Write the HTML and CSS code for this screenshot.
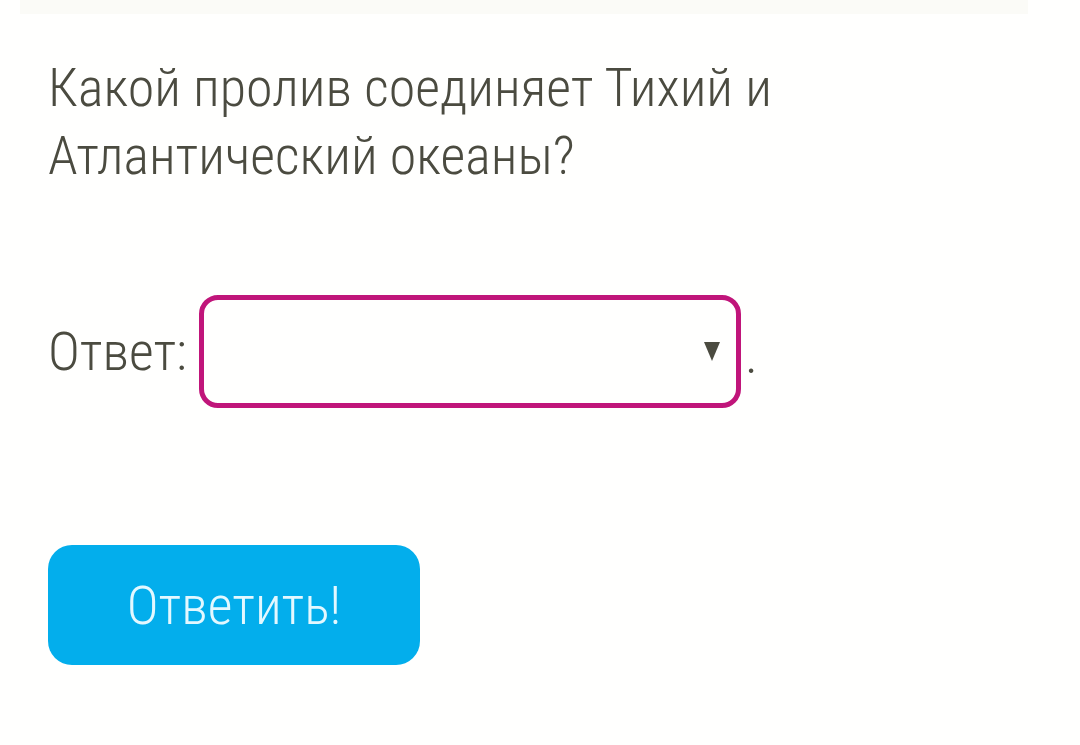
FILE: index.html
```html
<!DOCTYPE html>
<html lang="ru">
<head>
<meta charset="utf-8">
<link rel="stylesheet" href="styles.css">
</head>
<body>
<div class="topband"></div>
<main class="quiz">
  <p class="question">Какой пролив соединяет Тихий и Атлантический океаны?</p>
  <div class="answer-row">
    <span class="label">Ответ:</span>
    <div class="select">
      <span class="arrow"></span>
    </div>
    <span class="dot">.</span>
  </div>
  <button class="submit">Ответить!</button>
</main>
</body>
</html>
```
FILE: styles.css
```css
html, body {
  margin: 0;
  padding: 0;
  background: #fffffe;
}
body {
  width: 1080px;
  height: 745px;
  overflow: hidden;
  font-family: "Roboto Condensed", Roboto, "Liberation Sans", sans-serif;
  font-stretch: condensed;
  font-weight: 300;
  color: #4b4b40;
}
.topband {
  margin: 0 52px 0 20px;
  height: 14px;
  background: #fbfbf7;
}
.quiz {
  padding: 0 48px;
}
.question {
  margin: 40px 0 0;
  font-size: 54px;
  line-height: 68px;
  width: 760px;
}
.answer-row {
  display: flex;
  align-items: center;
  margin-top: 105px;
  height: 113px;
}
.label {
  font-size: 54px;
  margin-right: 12px;
}
.select {
  box-sizing: border-box;
  width: 542px;
  height: 113px;
  border: 5px solid #c0157a;
  border-radius: 19px;
  display: flex;
  align-items: center;
  justify-content: flex-end;
  padding-right: 16px;
}
.arrow {
  width: 0;
  height: 0;
  border-left: 8px solid transparent;
  border-right: 8px solid transparent;
  border-top: 19px solid #4b4b40;
}
.dot {
  font-size: 54px;
  align-self: flex-end;
  margin: 0 0 22px 4px;
}
.submit {
  display: block;
  margin-top: 137px;
  width: 372px;
  height: 120px;
  border: none;
  border-radius: 24px;
  background: #03aeec;
  color: #e3f8ff;
  font-family: inherit;
  font-stretch: condensed;
  font-weight: 300;
  font-size: 54px;
  padding: 0;
}
```
